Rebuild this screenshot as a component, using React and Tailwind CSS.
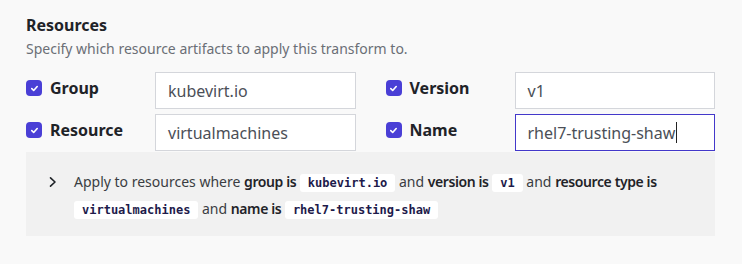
import React from "react";

function Check() {
  return (
    <span className="flex h-4 w-4 shrink-0 items-center justify-center rounded-[4px] bg-[#4a3fd6]">
      <svg width="9" height="9" viewBox="0 0 10 10" fill="none">
        <path d="M2 5.2 L4.1 7.2 L8 2.8" stroke="white" strokeWidth="1.8" strokeLinecap="round" strokeLinejoin="round" />
      </svg>
    </span>
  );
}

function Field({ label, value, focused }) {
  return (
    <div className="flex flex-1 items-start">
      <div className="flex h-8 w-[129px] shrink-0 items-center gap-2">
        <Check />
        <span className="text-base font-bold leading-6 text-[#1f2328]">{label}</span>
      </div>
      <div
        className={
          focused
            ? "flex h-[37px] flex-1 items-center border border-[#4338ca] bg-white pl-3 text-base text-[#4b4f57]"
            : "flex h-[37px] flex-1 items-center border border-[#d4d6db] bg-white pl-3 text-base text-[#4b4f57]"
        }
      >
        <span>{value}</span>
        {focused && <span className="ml-px inline-block h-[21px] w-px bg-[#222]" />}
      </div>
    </div>
  );
}

function Code({ children }) {
  return (
    <code className="rounded-[3px] bg-white px-2 py-[2px] font-['DejaVu_Sans_Mono',monospace] text-[12px] font-bold text-[#1e1b4b]">
      {children}
    </code>
  );
}

function B({ children }) {
  return <b className="font-semibold tracking-[-0.4px] text-[#1f2328]">{children}</b>;
}

export default function App() {
  return (
    <div className="h-[264px] w-[742px] bg-[#f9f9f9] pt-[13px] pl-[26px] pr-[27px] font-['Noto_Sans',sans-serif]">
      <h2 className="text-base font-bold leading-6 text-[#1f2328]">Resources</h2>
      <p className="mt-[2px] text-sm leading-5 text-[#6b6f76]">
        Specify which resource artifacts to apply this transform to.
      </p>
      <div className="mt-[13px] flex flex-col gap-[5px]">
        <div className="flex gap-[30px]">
          <Field label="Group" value="kubevirt.io" />
          <Field label="Version" value="v1" />
        </div>
        <div className="flex gap-[30px]">
          <Field label="Resource" value="virtualmachines" />
          <Field label="Name" value="rhel7-trusting-shaw" focused />
        </div>
      </div>
      <div className="mt-px flex h-[84px] items-start bg-[#f1f1f1] pt-[17px] pl-[22px] pr-[22px]">
        <svg className="mt-[7px] shrink-0" width="10" height="12" viewBox="0 0 10 12" fill="none">
          <path d="M2.5 1.8 L7 6 L2.5 10.2" stroke="#1f2328" strokeWidth="1.6" strokeLinecap="round" strokeLinejoin="round" />
        </svg>
        <p className="ml-[16px] text-sm leading-[26px] text-[#3a3d42]">
          Apply to resources where <B>group is</B> <Code>kubevirt.io</Code> and <B>version is</B> <Code>v1</Code> and{" "}
          <B>resource type is</B> <Code>virtualmachines</Code> and <B>name is</B> <Code>rhel7-trusting-shaw</Code>
        </p>
      </div>
    </div>
  );
}
